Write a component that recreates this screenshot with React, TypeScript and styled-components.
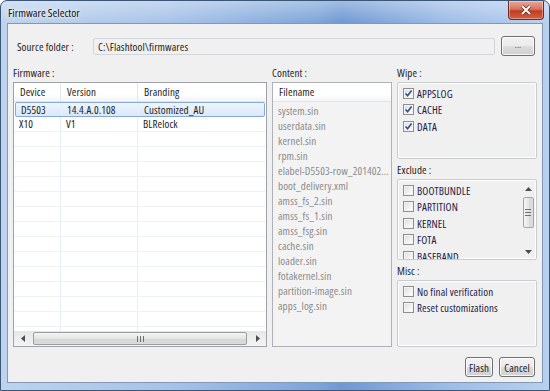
import styled, { createGlobalStyle } from "styled-components";

const GlobalStyle = createGlobalStyle`
  html, body {
    margin: 0;
    padding: 0;
    background: #ffffff;
  }
  * {
    box-sizing: border-box;
  }
`;

const Window = styled.div`
  width: 550px;
  height: 391px;
  display: flex;
  flex-direction: column;
  border: 1px solid #3a5575;
  border-radius: 7px 7px 0 0;
  padding: 0 6px 7px 6px;
  background: linear-gradient(
      to bottom,
      rgba(255, 255, 255, 0.35) 0px,
      rgba(255, 255, 255, 0) 22px
    ),
    linear-gradient(
      to right,
      #bdd3ee 0%,
      #a8c3e8 30%,
      #7da4d8 58%,
      #6f98d2 62%,
      #9ebde7 82%,
      #b9d0ee 100%
    );
  font-family: "Open Sans", "Noto Sans", sans-serif;
  font-stretch: 75%;
  font-size: 11px;
  letter-spacing: 0.1px;
  color: #1e1e1e;
  overflow: hidden;
`;

const TitleBar = styled.div`
  height: 22px;
  display: flex;
  align-items: flex-start;
  justify-content: space-between;
`;

const Title = styled.div`
  padding: 4px 0 0 1px;
  font-size: 11.5px;
  letter-spacing: 0;
  color: #101010;
  text-shadow: 0 0 6px rgba(255, 255, 255, 0.9), 0 0 3px rgba(255, 255, 255, 0.9);
`;

const CloseButton = styled.div`
  width: 36px;
  height: 19px;
  margin-right: -1px;
  border: 1px solid #6b2d26;
  border-top: none;
  border-radius: 0 0 4px 4px;
  background: linear-gradient(to bottom, #e9a899 0%, #d7735f 45%, #c23d22 55%, #d4603f 100%);
  box-shadow: inset 0 0 0 1px rgba(255, 255, 255, 0.35);
  display: flex;
  align-items: center;
  justify-content: center;
`;

const Client = styled.div`
  flex: 1;
  display: flex;
  flex-direction: column;
  background: #f0f0f0;
  border: 1px solid #8298b4;
  padding: 12px 5px 5px 5px;
  min-height: 0;
`;

const SourceRow = styled.div`
  display: flex;
  align-items: center;
  height: 20px;
`;

const SourceLabel = styled.div`
  flex: 0 0 80px;
  padding-left: 4px;
`;

const PathField = styled.div`
  flex: 0 0 402px;
  height: 17px;
  border: 1px solid #d2d6dc;
  border-radius: 2px;
  background: #f0f0f0;
  padding-left: 4px;
  line-height: 15px;
`;

const WinButton = styled.div<{ $w: number }>`
  width: ${(p) => p.$w}px;
  height: 20px;
  border: 1px solid #707070;
  border-radius: 3px;
  background: linear-gradient(to bottom, #f2f2f2 0%, #ebebeb 49%, #dddddd 50%, #cfcfcf 100%);
  box-shadow: inset 0 0 0 1px rgba(255, 255, 255, 0.8);
  display: flex;
  align-items: center;
  justify-content: center;
  color: #1e1e1e;
  line-height: 1;
`;

const BrowseButton = styled(WinButton)`
  margin-left: 6px;
  color: #5a3f8a;
  font-size: 9px;
  padding-bottom: 3px;
`;

const MainRow = styled.div`
  flex: 1;
  display: flex;
  gap: 5px;
  margin-top: 9px;
  min-height: 0;
`;

const Column = styled.div<{ $w: number }>`
  flex: 0 0 ${(p) => p.$w}px;
  min-width: 0;
  display: flex;
  flex-direction: column;
  min-height: 0;
`;

const GroupLabel = styled.div<{ $gap?: number }>`
  height: 16px;
  line-height: 16px;
  margin-top: ${(p) => p.$gap ?? 0}px;
  margin-bottom: 1px;
`;

const TableBox = styled.div`
  flex: 1;
  display: flex;
  flex-direction: column;
  border: 1px solid #9ea3aa;
  background: #ffffff;
  min-height: 0;
  overflow: hidden;
`;

const HeaderRow = styled.div`
  display: flex;
  height: 19px;
  background: linear-gradient(to bottom, #ffffff 0%, #ffffff 60%, #f4f5f7 100%);
  border-bottom: 1px solid #e2e5ea;
  flex: 0 0 auto;
`;

const HeaderCell = styled.div<{ $w?: number; $last?: boolean }>`
  ${(p) => (p.$w ? `flex: 0 0 ${p.$w}px;` : "flex: 1;")}
  padding-left: 6px;
  line-height: 18px;
  border-right: ${(p) => (p.$last ? "none" : "1px solid #e4e7eb")};
  color: #1e1e1e;
`;

const Rows = styled.div`
  flex: 1;
  overflow: hidden;
  min-height: 0;
`;

const Row = styled.div<{ $selected?: boolean }>`
  display: flex;
  height: 15px;
  border-bottom: 1px solid #edf2f9;
  ${(p) =>
    p.$selected
      ? `
    background: linear-gradient(to bottom, #eef5fd 0%, #d9e8fb 100%);
    border: 1px solid #86a9d6;
    border-radius: 2px;
    margin: 0 1px;
  `
      : ""}
`;

const Cell = styled.div<{ $w?: number; $last?: boolean }>`
  ${(p) => (p.$w ? `flex: 0 0 ${p.$w}px;` : "flex: 1;")}
  padding-left: 5px;
  line-height: 14px;
  white-space: nowrap;
  overflow: hidden;
  border-right: ${(p) => (p.$last ? "none" : "1px solid #e6eef8")};
`;

const HScroll = styled.div`
  flex: 0 0 15px;
  display: flex;
  align-items: center;
  background: linear-gradient(to bottom, #e6e6e6, #f4f4f4);
  padding: 0 2px;
`;

const ArrowBox = styled.div`
  flex: 0 0 13px;
  height: 13px;
  display: flex;
  align-items: center;
  justify-content: center;
`;

const HThumb = styled.div`
  flex: 1;
  height: 13px;
  margin: 0 4px;
  border: 1px solid #9d9d9d;
  border-radius: 2px;
  background: linear-gradient(to bottom, #f5f5f5 0%, #e4e4e4 50%, #d6d6d6 51%, #dcdcdc 100%);
  display: flex;
  align-items: center;
  justify-content: center;
`;

const ContentBox = styled.div`
  flex: 1;
  display: flex;
  flex-direction: column;
  border: 1px solid #aeb2b8;
  background: #f3f3f3;
  min-height: 0;
  overflow: hidden;
`;

const FileItem = styled.div`
  height: 15px;
  line-height: 15px;
  padding-left: 5px;
  color: #8b8b8b;
  white-space: nowrap;
  overflow: hidden;
`;

const FileList = styled.div`
  padding-top: 1px;
`;

const GroupBox = styled.div<{ $h?: number }>`
  ${(p) => (p.$h ? `flex: 0 0 ${p.$h}px;` : "flex: 1;")}
  border: 1px solid #c9cccf;
  border-radius: 2px;
  box-shadow: inset 0 0 0 1px #ffffff;
  padding: 2px 0 0 5px;
  display: flex;
  min-height: 0;
`;

const CheckList = styled.div`
  flex: 1;
  min-width: 0;
  display: flex;
  flex-direction: column;
  overflow: hidden;
`;

const CheckRow = styled.div`
  display: flex;
  align-items: center;
  height: 16.5px;
  flex: 0 0 16.5px;
  color: #23204a;
  white-space: nowrap;
`;

const Box = styled.span`
  flex: 0 0 11px;
  width: 11px;
  height: 11px;
  margin-right: 3px;
  border: 1px solid #8f8f8f;
  background: linear-gradient(135deg, #dcdcdc 0%, #f6f6f6 70%, #ffffff 100%);
  box-shadow: inset 0 0 0 1px #f4f4f4;
  display: flex;
  align-items: center;
  justify-content: center;
`;

const VScroll = styled.div`
  flex: 0 0 12px;
  margin: 0 2px 1px 0;
  display: flex;
  flex-direction: column;
  align-items: center;
  background: #f0f0f0;
`;

const VThumb = styled.div`
  width: 11px;
  height: 31px;
  margin-top: 2px;
  border: 1px solid #a5a5a5;
  border-radius: 2px;
  background: linear-gradient(to right, #f4f4f4 0%, #e6e6e6 50%, #d8d8d8 51%, #dedede 100%);
  display: flex;
  align-items: center;
  justify-content: center;
`;

const Spacer = styled.div`
  flex: 1;
`;

const ButtonRow = styled.div`
  display: flex;
  justify-content: flex-end;
  gap: 6px;
  margin-top: 10px;
  padding-right: 2px;
`;

function CheckBox({ checked }: { checked?: boolean }) {
  return (
    <Box>
      {checked && (
        <svg width="9" height="9" viewBox="0 0 9 9">
          <path d="M1.5 4.5 L3.6 6.8 L7.6 1.5" fill="none" stroke="#2b4f92" strokeWidth="1.6" />
        </svg>
      )}
    </Box>
  );
}

const firmware = [
  { device: "D5503", version: "14.4.A.0.108", branding: "Customized_AU", selected: true },
  { device: "X10", version: "V1", branding: "BLRelock" },
];

const files = [
  "system.sin",
  "userdata.sin",
  "kernel.sin",
  "rpm.sin",
  "elabel-D5503-row_201402...",
  "boot_delivery.xml",
  "amss_fs_2.sin",
  "amss_fs_1.sin",
  "amss_fsg.sin",
  "cache.sin",
  "loader.sin",
  "fotakernel.sin",
  "partition-image.sin",
  "apps_log.sin",
];

const excludes = ["BOOTBUNDLE", "PARTITION", "KERNEL", "FOTA", "BASEBAND"];

function App() {
  const emptyRows = Array.from({ length: 14 });
  return (
    <>
      <GlobalStyle />
      <Window>
        <TitleBar>
          <Title>Firmware Selector</Title>
          <CloseButton>
            <svg width="12" height="10" viewBox="0 0 12 10">
              <path d="M2 1 L10 9 M10 1 L2 9" stroke="#5a1d14" strokeWidth="3.2" />
              <path d="M2 1 L10 9 M10 1 L2 9" stroke="#ffffff" strokeWidth="2" />
            </svg>
          </CloseButton>
        </TitleBar>
        <Client>
          <SourceRow>
            <SourceLabel>Source folder :</SourceLabel>
            <PathField>C:\Flashtool\firmwares</PathField>
            <BrowseButton $w={34}>...</BrowseButton>
          </SourceRow>
          <MainRow>
            <Column $w={254}>
              <GroupLabel>Firmware :</GroupLabel>
              <TableBox>
                <HeaderRow>
                  <HeaderCell $w={47}>Device</HeaderCell>
                  <HeaderCell $w={77}>Version</HeaderCell>
                  <HeaderCell $last>Branding</HeaderCell>
                </HeaderRow>
                <Rows>
                  {firmware.map((f) => (
                    <Row key={f.device} $selected={f.selected}>
                      <Cell $w={f.selected ? 46 : 47}>{f.device}</Cell>
                      <Cell $w={77}>{f.version}</Cell>
                      <Cell $last>{f.branding}</Cell>
                    </Row>
                  ))}
                  {emptyRows.map((_, i) => (
                    <Row key={i}>
                      <Cell $w={47} />
                      <Cell $w={77} />
                      <Cell $last />
                    </Row>
                  ))}
                </Rows>
                <HScroll>
                  <ArrowBox>
                    <svg width="4" height="7" viewBox="0 0 4 7">
                      <path d="M4 0 L0 3.5 L4 7 Z" fill="#4d4d4d" />
                    </svg>
                  </ArrowBox>
                  <HThumb>
                    <svg width="7" height="6" viewBox="0 0 7 6">
                      <path d="M0.5 0 V6 M3.5 0 V6 M6.5 0 V6" stroke="#6f6f6f" strokeWidth="1" />
                    </svg>
                  </HThumb>
                  <ArrowBox>
                    <svg width="4" height="7" viewBox="0 0 4 7">
                      <path d="M0 0 L4 3.5 L0 7 Z" fill="#4d4d4d" />
                    </svg>
                  </ArrowBox>
                </HScroll>
              </TableBox>
            </Column>
            <Column $w={120}>
              <GroupLabel>Content :</GroupLabel>
              <ContentBox>
                <HeaderRow>
                  <HeaderCell $last>Filename</HeaderCell>
                </HeaderRow>
                <FileList>
                  {files.map((f) => (
                    <FileItem key={f}>{f}</FileItem>
                  ))}
                </FileList>
              </ContentBox>
            </Column>
            <Column $w={140}>
              <GroupLabel>Wipe :</GroupLabel>
              <GroupBox $h={77}>
                <CheckList>
                  <CheckRow>
                    <CheckBox checked />
                    APPSLOG
                  </CheckRow>
                  <CheckRow>
                    <CheckBox checked />
                    CACHE
                  </CheckRow>
                  <CheckRow>
                    <CheckBox checked />
                    DATA
                  </CheckRow>
                </CheckList>
              </GroupBox>
              <GroupLabel $gap={3}>Exclude :</GroupLabel>
              <GroupBox $h={81}>
                <CheckList>
                  {excludes.map((e) => (
                    <CheckRow key={e}>
                      <CheckBox />
                      {e}
                    </CheckRow>
                  ))}
                </CheckList>
                <VScroll>
                  <ArrowBox>
                    <svg width="7" height="4" viewBox="0 0 7 4">
                      <path d="M0 4 L3.5 0 L7 4 Z" fill="#4d4d4d" />
                    </svg>
                  </ArrowBox>
                  <VThumb>
                    <svg width="6" height="7" viewBox="0 0 6 7">
                      <path d="M0 0.5 H6 M0 3.5 H6 M0 6.5 H6" stroke="#6f6f6f" strokeWidth="1" />
                    </svg>
                  </VThumb>
                  <Spacer />
                  <ArrowBox>
                    <svg width="7" height="4" viewBox="0 0 7 4">
                      <path d="M0 0 L7 0 L3.5 4 Z" fill="#4d4d4d" />
                    </svg>
                  </ArrowBox>
                </VScroll>
              </GroupBox>
              <GroupLabel $gap={3}>Misc :</GroupLabel>
              <GroupBox>
                <CheckList>
                  <CheckRow>
                    <CheckBox />
                    No final verification
                  </CheckRow>
                  <CheckRow>
                    <CheckBox />
                    Reset customizations
                  </CheckRow>
                </CheckList>
              </GroupBox>
            </Column>
          </MainRow>
          <ButtonRow>
            <WinButton $w={28}>Flash</WinButton>
            <WinButton $w={36}>Cancel</WinButton>
          </ButtonRow>
        </Client>
      </Window>
    </>
  );
}

export default App;
